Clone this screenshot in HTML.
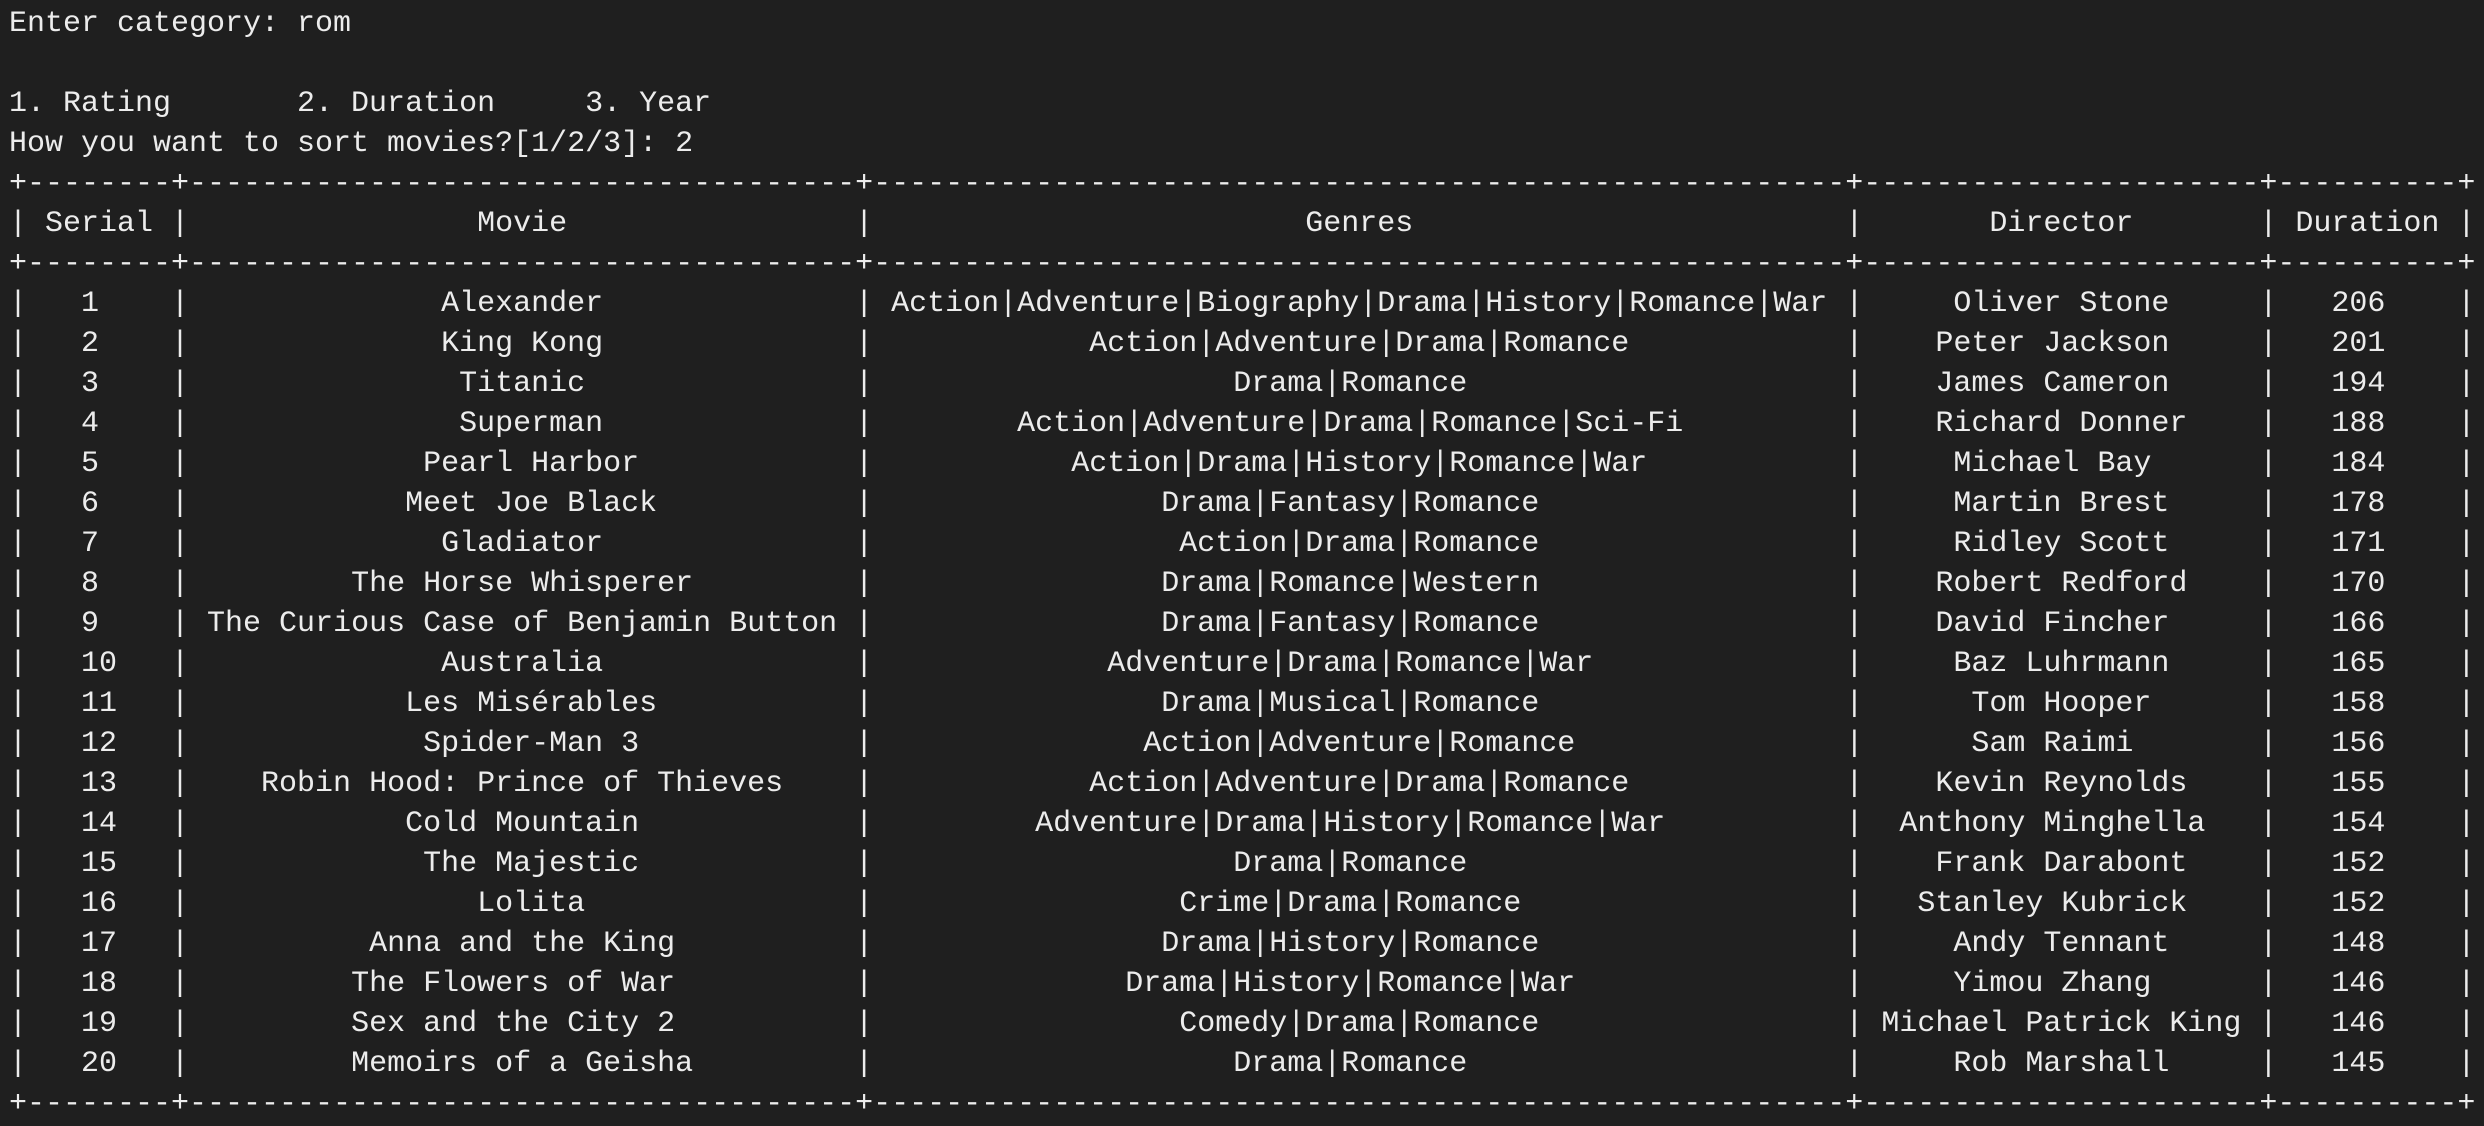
<!DOCTYPE html>
<html><head><meta charset="utf-8"><style>
html,body{margin:0;padding:0;background:#1f1f1f;width:2484px;height:1126px;overflow:hidden}
pre{margin:0;padding:4px 0 0 9px;font-family:"Liberation Mono",monospace;font-size:30px;line-height:40px;color:#ececec;white-space:pre}
i{font-style:normal;display:inline-block;box-sizing:border-box;vertical-align:top}
.s{width:8ch}.m{width:37ch}.g{width:54ch}.d{width:22ch}.u{width:10ch}
</style></head><body><pre>Enter category: rom

1. Rating       2. Duration     3. Year
How you want to sort movies?[1/2/3]: 2
+--------+-------------------------------------+------------------------------------------------------+----------------------+----------+
|<i class="s" style="padding-left:1ch">Serial</i>|<i class="m" style="padding-left:16ch">Movie</i>|<i class="g" style="padding-left:24ch">Genres</i>|<i class="d" style="padding-left:7ch">Director</i>|<i class="u" style="padding-left:1ch">Duration</i>|
+--------+-------------------------------------+------------------------------------------------------+----------------------+----------+
|<i class="s" style="padding-left:3ch">1</i>|<i class="m" style="padding-left:14ch">Alexander</i>|<i class="g" style="padding-left:1ch">Action|Adventure|Biography|Drama|History|Romance|War</i>|<i class="d" style="padding-left:5ch">Oliver Stone</i>|<i class="u" style="padding-left:3ch">206</i>|
|<i class="s" style="padding-left:3ch">2</i>|<i class="m" style="padding-left:14ch">King Kong</i>|<i class="g" style="padding-left:12ch">Action|Adventure|Drama|Romance</i>|<i class="d" style="padding-left:4ch">Peter Jackson</i>|<i class="u" style="padding-left:3ch">201</i>|
|<i class="s" style="padding-left:3ch">3</i>|<i class="m" style="padding-left:15ch">Titanic</i>|<i class="g" style="padding-left:20ch">Drama|Romance</i>|<i class="d" style="padding-left:4ch">James Cameron</i>|<i class="u" style="padding-left:3ch">194</i>|
|<i class="s" style="padding-left:3ch">4</i>|<i class="m" style="padding-left:15ch">Superman</i>|<i class="g" style="padding-left:8ch">Action|Adventure|Drama|Romance|Sci-Fi</i>|<i class="d" style="padding-left:4ch">Richard Donner</i>|<i class="u" style="padding-left:3ch">188</i>|
|<i class="s" style="padding-left:3ch">5</i>|<i class="m" style="padding-left:13ch">Pearl Harbor</i>|<i class="g" style="padding-left:11ch">Action|Drama|History|Romance|War</i>|<i class="d" style="padding-left:5ch">Michael Bay</i>|<i class="u" style="padding-left:3ch">184</i>|
|<i class="s" style="padding-left:3ch">6</i>|<i class="m" style="padding-left:12ch">Meet Joe Black</i>|<i class="g" style="padding-left:16ch">Drama|Fantasy|Romance</i>|<i class="d" style="padding-left:5ch">Martin Brest</i>|<i class="u" style="padding-left:3ch">178</i>|
|<i class="s" style="padding-left:3ch">7</i>|<i class="m" style="padding-left:14ch">Gladiator</i>|<i class="g" style="padding-left:17ch">Action|Drama|Romance</i>|<i class="d" style="padding-left:5ch">Ridley Scott</i>|<i class="u" style="padding-left:3ch">171</i>|
|<i class="s" style="padding-left:3ch">8</i>|<i class="m" style="padding-left:9ch">The Horse Whisperer</i>|<i class="g" style="padding-left:16ch">Drama|Romance|Western</i>|<i class="d" style="padding-left:4ch">Robert Redford</i>|<i class="u" style="padding-left:3ch">170</i>|
|<i class="s" style="padding-left:3ch">9</i>|<i class="m" style="padding-left:1ch">The Curious Case of Benjamin Button</i>|<i class="g" style="padding-left:16ch">Drama|Fantasy|Romance</i>|<i class="d" style="padding-left:4ch">David Fincher</i>|<i class="u" style="padding-left:3ch">166</i>|
|<i class="s" style="padding-left:3ch">10</i>|<i class="m" style="padding-left:14ch">Australia</i>|<i class="g" style="padding-left:13ch">Adventure|Drama|Romance|War</i>|<i class="d" style="padding-left:5ch">Baz Luhrmann</i>|<i class="u" style="padding-left:3ch">165</i>|
|<i class="s" style="padding-left:3ch">11</i>|<i class="m" style="padding-left:12ch">Les Misérables</i>|<i class="g" style="padding-left:16ch">Drama|Musical|Romance</i>|<i class="d" style="padding-left:6ch">Tom Hooper</i>|<i class="u" style="padding-left:3ch">158</i>|
|<i class="s" style="padding-left:3ch">12</i>|<i class="m" style="padding-left:13ch">Spider-Man 3</i>|<i class="g" style="padding-left:15ch">Action|Adventure|Romance</i>|<i class="d" style="padding-left:6ch">Sam Raimi</i>|<i class="u" style="padding-left:3ch">156</i>|
|<i class="s" style="padding-left:3ch">13</i>|<i class="m" style="padding-left:4ch">Robin Hood: Prince of Thieves</i>|<i class="g" style="padding-left:12ch">Action|Adventure|Drama|Romance</i>|<i class="d" style="padding-left:4ch">Kevin Reynolds</i>|<i class="u" style="padding-left:3ch">155</i>|
|<i class="s" style="padding-left:3ch">14</i>|<i class="m" style="padding-left:12ch">Cold Mountain</i>|<i class="g" style="padding-left:9ch">Adventure|Drama|History|Romance|War</i>|<i class="d" style="padding-left:2ch">Anthony Minghella</i>|<i class="u" style="padding-left:3ch">154</i>|
|<i class="s" style="padding-left:3ch">15</i>|<i class="m" style="padding-left:13ch">The Majestic</i>|<i class="g" style="padding-left:20ch">Drama|Romance</i>|<i class="d" style="padding-left:4ch">Frank Darabont</i>|<i class="u" style="padding-left:3ch">152</i>|
|<i class="s" style="padding-left:3ch">16</i>|<i class="m" style="padding-left:16ch">Lolita</i>|<i class="g" style="padding-left:17ch">Crime|Drama|Romance</i>|<i class="d" style="padding-left:3ch">Stanley Kubrick</i>|<i class="u" style="padding-left:3ch">152</i>|
|<i class="s" style="padding-left:3ch">17</i>|<i class="m" style="padding-left:10ch">Anna and the King</i>|<i class="g" style="padding-left:16ch">Drama|History|Romance</i>|<i class="d" style="padding-left:5ch">Andy Tennant</i>|<i class="u" style="padding-left:3ch">148</i>|
|<i class="s" style="padding-left:3ch">18</i>|<i class="m" style="padding-left:9ch">The Flowers of War</i>|<i class="g" style="padding-left:14ch">Drama|History|Romance|War</i>|<i class="d" style="padding-left:5ch">Yimou Zhang</i>|<i class="u" style="padding-left:3ch">146</i>|
|<i class="s" style="padding-left:3ch">19</i>|<i class="m" style="padding-left:9ch">Sex and the City 2</i>|<i class="g" style="padding-left:17ch">Comedy|Drama|Romance</i>|<i class="d" style="padding-left:1ch">Michael Patrick King</i>|<i class="u" style="padding-left:3ch">146</i>|
|<i class="s" style="padding-left:3ch">20</i>|<i class="m" style="padding-left:9ch">Memoirs of a Geisha</i>|<i class="g" style="padding-left:20ch">Drama|Romance</i>|<i class="d" style="padding-left:5ch">Rob Marshall</i>|<i class="u" style="padding-left:3ch">145</i>|
+--------+-------------------------------------+------------------------------------------------------+----------------------+----------+</pre></body></html>
